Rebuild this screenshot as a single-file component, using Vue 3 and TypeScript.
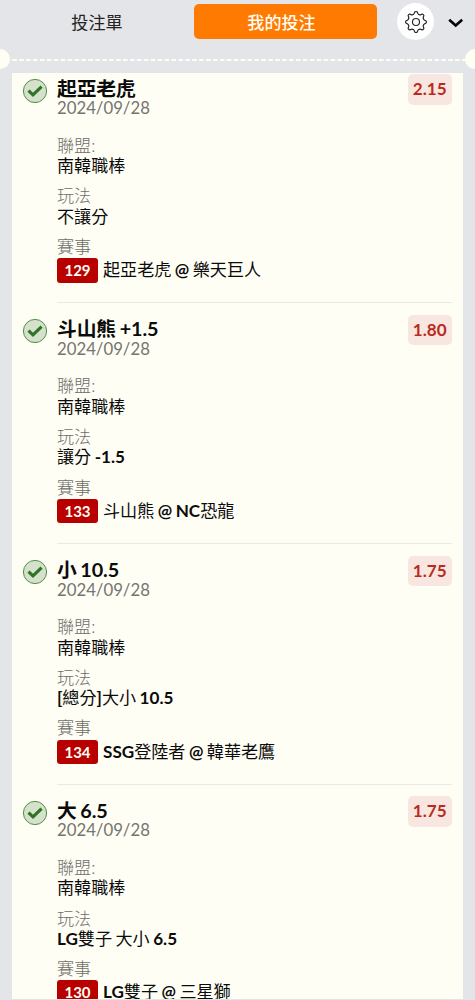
<script setup lang="ts">
interface Bet {
  title: string
  odds: string
  play: string
  code: string
  match: string
}

const date = '2024/09/28'
const league = '南韓職棒'

const bets: Bet[] = [
  { title: '起亞老虎', odds: '2.15', play: '不讓分', code: '129', match: '起亞老虎 @ 樂天巨人' },
  { title: '斗山熊 +1.5', odds: '1.80', play: '讓分 -1.5', code: '133', match: '斗山熊 @ NC恐龍' },
  { title: '小 10.5', odds: '1.75', play: '[總分]大小 10.5', code: '134', match: 'SSG登陸者 @ 韓華老鷹' },
  { title: '大 6.5', odds: '1.75', play: 'LG雙子 大小 6.5', code: '130', match: 'LG雙子 @ 三星獅' },
]

// Latin runs are set heavier than the Chinese text around them.
const runs = (text: string) =>
  text.split(/([\x21-\x7e]+)/).filter(Boolean).map((t) => ({ t, latin: /[\x21-\x7e]/.test(t) }))

const point = (radius: number, deg: number) => {
  const a = (deg * Math.PI) / 180
  return `${(12 + radius * Math.sin(a)).toFixed(2)} ${(12 - radius * Math.cos(a)).toFixed(2)}`
}
const gear =
  'M' +
  Array.from({ length: 8 }, (_, i) => {
    const d = i * 45
    return `${point(10.2, d - 6)} Q${point(10.8, d)} ${point(10.2, d + 6)} L${point(8.9, d + 11)} Q${point(7.2, d + 22.5)} ${point(8.9, d + 34)}`
  }).join(' L') +
  'Z'
</script>

<template>
  <div class="app">
    <header class="bar">
      <button class="tab">投注單</button>
      <button class="tab active">我的投注</button>
      <button class="settings" aria-label="設定">
        <svg width="24" height="24" viewBox="0 0 24 24" fill="none" stroke="#222" stroke-width="1.15" stroke-linejoin="round">
          <path :d="gear" />
          <circle cx="12" cy="12" r="3.5" />
        </svg>
      </button>
      <svg class="chevron" width="16" height="10" viewBox="0 0 16 10" fill="none" stroke="#050505" stroke-width="2.7">
        <path d="M1.2 1.8 L7.7 7.4 L14.2 1.8" />
      </svg>
    </header>
    <div class="perforation">
      <i class="notch"></i>
      <svg class="dashes" width="457" height="2" viewBox="0 0 457 2">
        <path d="M2.3 1H457" stroke="#fffef5" stroke-width="2" stroke-dasharray="4.6 2.35" />
      </svg>
      <i class="notch right"></i>
    </div>
    <main class="slip">
      <section v-for="bet in bets" :key="bet.code" class="bet">
        <svg class="check" width="26" height="26" viewBox="0 0 26 26" fill="none">
          <circle cx="13" cy="13" r="11.6" fill="#d5e1cc" stroke="#4f9143" stroke-width="1" />
          <path d="M6.5 12.6 L11 16.9 L19.6 8.7" stroke="#2e7423" stroke-width="3.2" />
        </svg>
        <div class="body">
          <div class="head">
            <div>
              <h3>{{ bet.title }}</h3>
              <p class="muted">{{ date }}</p>
            </div>
            <span class="odds">{{ bet.odds }}</span>
          </div>
          <div class="field league">
            <p class="muted">聯盟:</p>
            <p>{{ league }}</p>
          </div>
          <div class="field">
            <p class="muted">玩法</p>
            <p><span v-for="(r, i) in runs(bet.play)" :key="i" :class="{ latin: r.latin }">{{ r.t }}</span></p>
          </div>
          <div class="field">
            <p class="muted">賽事</p>
            <p class="match">
              <span class="code">{{ bet.code }}</span>
              <span class="teams"><span v-for="(r, i) in runs(bet.match)" :key="i" :class="{ latin: r.latin }">{{ r.t }}</span></span>
            </p>
          </div>
        </div>
      </section>
    </main>
  </div>
</template>

<style>
body {
  background: #e4e5e8;
  overflow: hidden;
}
</style>

<style scoped>
.app {
  display: flex;
  flex-direction: column;
  width: 475px;
  height: 1000px;
  box-sizing: border-box;
  padding-bottom: 1px;
  overflow: hidden;
  background: #e4e5e8;
  color: #0b0b0b;
  font: 400 17.1px Lato, "Noto Sans CJK TC", sans-serif;
}
.bar {
  display: flex;
  flex: none;
  align-items: center;
  height: 43px;
}
button {
  border: 0;
  padding: 0;
  background: none;
  font: inherit;
  color: #222;
}
.tab {
  width: 194px;
  height: 35px;
}
.tab.active {
  width: 183px;
  padding-right: 8px;
  border-radius: 5px;
  background: #ff7a00;
  color: #fffef5;
  font-weight: 500;
}
.settings {
  display: grid;
  place-items: center;
  width: 37px;
  height: 37px;
  margin-left: 20px;
  border-radius: 50%;
  background: #fff;
}
.chevron {
  margin: 3px 0 0 14px;
}
.perforation {
  display: flex;
  flex: none;
  align-items: center;
  justify-content: space-between;
  height: 30px;
}
.notch {
  flex: none;
  width: 10px;
  height: 20px;
  margin-top: 1px;
  border-radius: 0 10px 10px 0;
  background: #fffef5;
}
.notch.right {
  border-radius: 10px 0 0 10px;
}
.dashes {
  margin-top: 4px;
}
.slip {
  flex: 1;
  min-height: 0;
  margin: 0 12px;
  overflow: hidden;
  background: #fffef5;
}
.bet {
  display: flex;
  height: 240.8px;
}
.check {
  flex: none;
  margin: 4.5px 9px 0 10px;
}
.body {
  width: 394.5px;
  height: 228.4px;
  border-bottom: 1.5px solid #ebe9e4;
  padding-top: 1px;
}
.head {
  display: flex;
  justify-content: space-between;
  align-items: flex-start;
}
h3 {
  margin: 3.5px 0 0;
  font-size: 19.8px;
  line-height: 20.5px;
  font-weight: 700;
  letter-spacing: -0.1px;
  word-spacing: -1.1px;
  white-space: nowrap;
}
p {
  margin: 0;
  line-height: 20.5px;
  white-space: nowrap;
}
.muted {
  color: #6e6e6b;
  font-weight: 300;
}
.head .muted {
  color: #747471;
  font-size: 16.75px;
  font-weight: 400;
}
.odds {
  width: 43.5px;
  height: 30.5px;
  border-radius: 5px;
  background: #f7e7e0;
  color: #bb2a20;
  font-weight: 700;
  line-height: 30.5px;
  text-align: center;
}
.field {
  margin-top: 9.6px;
  word-spacing: -0.9px;
}
.league {
  margin-top: 17.1px;
}
.latin {
  font-weight: 700;
}
.match {
  display: flex;
  align-items: center;
  height: 25px;
  margin-top: 0.5px;
}
.code {
  width: 41px;
  height: 24.5px;
  margin-right: 5px;
  border-radius: 3px;
  background: #b80000;
  color: #fffef5;
  font-size: 15px;
  font-weight: 700;
  line-height: 24.5px;
  text-align: center;
}
</style>
